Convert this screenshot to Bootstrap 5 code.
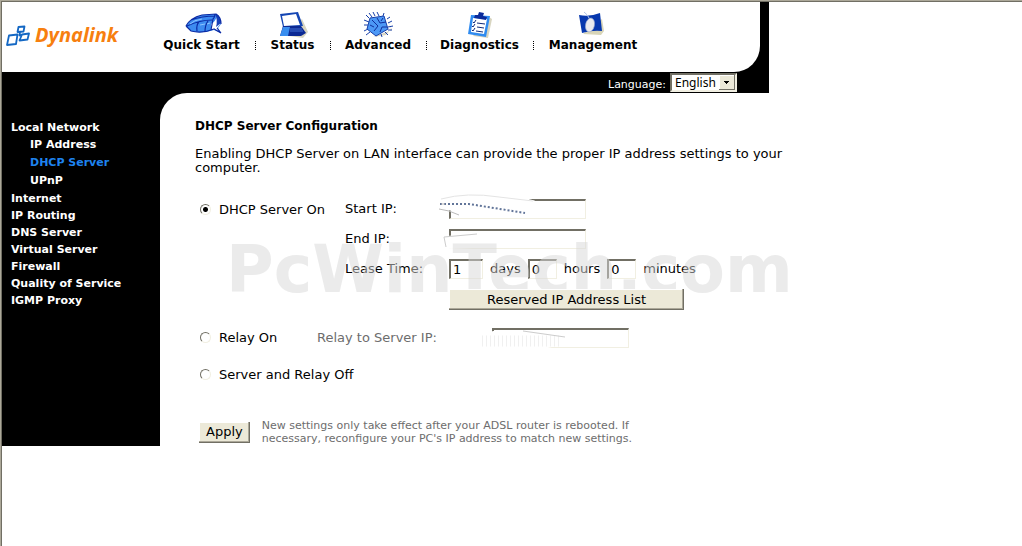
<!DOCTYPE html>
<html lang="en">
<head>
<meta charset="utf-8">
<meta name="viewport" content="width=device-width, initial-scale=1">
<title>DHCP Server Configuration</title>
<link href="https://cdn.jsdelivr.net/npm/bootstrap@5.3.0/dist/css/bootstrap.min.css" rel="stylesheet">
<script src="https://cdn.jsdelivr.net/npm/bootstrap@5.3.0/dist/js/bootstrap.bundle.min.js" defer></script>
<style>
  :root { --face: #ece9d8; --dark: #716f64; --mid: #aca899; --pale: #f1efe2; }
  html { min-height: 100%; display: flex; }
  body { flex: 1; font-family: "DejaVu Sans", Verdana, sans-serif; font-size: 13px; line-height: 14px; color: #000; background: #fff;
    border-top: 1px solid var(--mid); border-left: 1px solid var(--mid); }
  .viewframe { border-top: 1px solid var(--dark); border-left: 1px solid var(--dark); min-height: calc(100vh - 1px); }
  .shell { max-width: 767px; background: #000; }
  .masthead { background: #fff; margin-right: 9px; height: 70px; border-bottom-right-radius: 26px; }
  .brand { width: 146px; padding: 22px 0 0 3px; color: #f77f0f; text-decoration: none; }
  .brand-text { font: italic bold 20px/22px "Open Sans", sans-serif; }
  .topnav a { display: flex; flex-direction: column; align-items: center; color: #000; text-decoration: none; font-weight: bold; font-size: 12px; line-height: 12px; padding-top: 9px; }
  .topnav li + li a { background: repeating-linear-gradient(#000 0 1px, #fff 1px 2px) 0 39px / 1px 10px no-repeat; }
  .topnav svg { height: 28px; width: 40px; }
  .w-quick { width: 107px; } .w-status { width: 75px; } .w-adv { width: 96px; } .w-diag { width: 107px; } .w-man { width: 120px; }
  .langbar { height: 21px; padding-right: 32px; color: #fff; font-size: 11px; }
  .lang { appearance: none; width: 67px; height: 19px; border: 2px solid; border-color: var(--dark) var(--pale) var(--pale) var(--dark); border-radius: 0; padding: 0 0 0 3px; font: 12px/14px "Noto Sans", sans-serif; color: #000;
    background: #fff url("data:image/svg+xml,%3Csvg xmlns='http://www.w3.org/2000/svg' width='16' height='15'%3E%3Cpath fill='%23716f64' d='M0 0h16v15H0z'/%3E%3Cpath fill='%23fff' d='M0 0h15v14H0z'/%3E%3Cpath fill='%23ece9d8' d='M1 1h14v13H1z'/%3E%3Cpath d='M5 6h5v1H5zM6 7h3v1H6zM7 8h1v1H7z'/%3E%3C/svg%3E") right center no-repeat; }
  .sidemenu { width: 158px; padding: 26px 0 137px 9px; font-size: 11px; font-weight: bold; line-height: 17px; }
  .sidemenu a { color: #fff; text-decoration: none; }
  .sidemenu ul ul { padding-left: 19px; line-height: 18px; }
  .sidemenu a.current { color: #1e83ef; }
  .content { background: #fff; border-top-left-radius: 27px; padding: 26px 0 0 35px; position: relative; }
  h1 { font-size: 12px; line-height: 14px; font-weight: bold; margin: 0 0 14px; }
  .intro { margin: 0 -20px 24px 0; }
  .choice { display: flex; align-items: center; gap: 8px; padding-left: 5px; }
  .choice input { appearance: none; flex: none; width: 11px; height: 11px; margin: 0 0 2px; border-radius: 50%; border: 1px solid; border-color: var(--dark) var(--pale) var(--pale) var(--dark); background: #fff; }
  .choice input:checked { background: radial-gradient(circle, #000 0 2px, #fff 3px); }
  .choice-wide { width: 150px; } .choice-relay { width: 122px; }
  .choice-off { margin-top: 20px; }
  .lease-rows { gap: 10px; }
  .lease { gap: 7px; }
  .name { width: 104px; } .name-relay { width: 175px; }
  .field { height: 20px; border: 2px solid; border-color: var(--dark) var(--pale) var(--pale) var(--dark); border-width: 2px 1px 1px 2px; border-radius: 0; background: #fff; padding: 0 2px; font-size: 13px; line-height: 14px; }
  .ip { width: 137px; } .short { width: 34px; } .shorter { width: 29px; }
  .smudge { position: absolute; pointer-events: none; }
  .smudge-start { left: 92px; top: -8px; } .smudge-end { left: 98px; top: 2px; } .smudge-relay { left: 284px; top: -4px; }
  .btn-classic { font-size: 13px; line-height: 14px; border-radius: 0; background: var(--face); color: #000; padding: 2px 7px; border: 0; box-shadow: inset -1px -1px var(--dark), inset -2px -2px var(--mid), inset 1px 1px #fff; height: 21px; }
  .reserved { width: 235px; margin-left: 104px; position: relative; z-index: 3; }
  .relay-row { margin-top: 18px; }
  .apply-row { margin-top: 37px; }
  .muted { color: #6d6d6d; }
  .note { font-size: 11px; line-height: 13px; max-width: 410px; }
  .watermark { position: absolute; left: 66px; top: 144px; font-size: 65px; line-height: 65px; font-weight: bold; color: rgba(216,216,216,.5); pointer-events: none; z-index: 2; }
</style>
</head>
<body>
<div class="viewframe">
 <div class="shell">
  <header class="masthead d-flex">
    <a class="brand d-flex flex-shrink-0 align-items-start" href="#">
      <svg width="26" height="24" viewBox="0 0 26 24" fill="none" stroke="#1468c4" stroke-width="1.800" stroke-linejoin="round" aria-hidden="true">
        <path d="M4 11.500 12.500 10.500 11 20 2 21z M13.500 3 19.500 2.500 18.500 7.500 12.500 8z M17 10.500 24 9.500 22.500 15.500 14.500 16.500z M15 8 14.500 11.500 17 10.500"/>
      </svg>
      <span class="brand-text ms-1">Dynalink</span>
    </a>
    <nav aria-label="Main">
      <ul class="topnav d-flex list-unstyled m-0">
        <li class="w-quick"><a href="#">
          <svg viewBox="0 0 40 28" aria-hidden="true"><path d="M4 15Q8 7 20 4L34 3Q39 6 39 13L36 17 39 22 32 19Q20 23 9 20z" fill="#3d8bf0"/><path d="M29 13Q34 10 35 5L39 12 35 17 37 20 29 18z" fill="#fff"/><path d="M33 3Q38 5 39 12L34 16Q36 9 33 3z" fill="#1640b8"/><path d="M4 15Q8 7 20 4L34 3Q39 6 39 13M35 17 39 22 32 18Q20 23 9 20L4 15M5 15Q18 9 30 9M15 20Q14 14 17 11M23 21Q23 14 26 10M29 19 31 8Q33 6 33 3M9 9Q20 5 33 5" fill="none" stroke="#0b2aa4" stroke-width="1.200"/><path d="M8 13Q12 9 20 8M18 14 23 13M25 13 28 12" fill="none" stroke="#8cc4ff"/></svg>Quick Start</a></li>
        <li class="w-status"><a href="#">
          <svg viewBox="0 0 40 28" aria-hidden="true"><path d="M10 24 30 27 35 21 29 8z" fill="#d8d5c0"/><path d="M7 3 25 1 30 15 10 16z" fill="#1546b4"/><path d="M9 5 23 3 27 14 11 15z" fill="#fff"/><path d="M10 15 28 15 33 22 28 25 7 25z" fill="#0c2993"/><path d="M10 16 17 16 15 25 7 25z" fill="#398ef0"/><path d="M17 18H29M17 20H30" stroke="#5d91f1" stroke-width=".7"/></svg>Status</a></li>
        <li class="w-adv"><a href="#">
          <svg viewBox="0 0 40 28" aria-hidden="true"><path d="M15 26 28 24 33 18 30 9 34 19z" fill="#d8d5c0"/><path d="M11 7 8 4M14 6 11 2M17 5 15 1M21 5 19 1M25 5 26 2M29 8 32 6M30 12 34 10M30 16 35 15M30 19 34 19M27 21 30 24M23 23 24 26M12 21 8 24M10 18 6 20M10 14 6 14M11 11 6 9" stroke="#173fa8"/><path d="M12 7 26 5 30 18 18 25 9 18z" fill="#4c98f5" stroke="#173fa8"/><path d="M14 9 20 15 16 20M19 7 22 12 28 11M12 14 16 16M22 21 24 16 29 16M25 7 23 10" stroke="#102f9c" fill="none"/></svg>Advanced</a></li>
        <li class="w-diag"><a href="#">
          <svg viewBox="0 0 40 28" aria-hidden="true"><path d="M13 25 28 27 32 8 29 6z" fill="#d8d5c0"/><path d="M11 4 30 5 26 26 8 23z" fill="#2f8bf0"/><path d="M13 7 27 8 24 23 11 21z" fill="#fff"/><path d="M15 4 18 4 19 1 24 2 23 5 27 6 26 9 14 7z" fill="#0b2b9b"/><path d="M13 11 14 12 16 9M12 15 13 16 15 13M12 19 13 20 15 17M17 12 25 13M17 16 24 17M16 20 23 21" stroke="#112b78" fill="none"/></svg>Diagnostics</a></li>
        <li class="w-man"><a href="#">
          <svg viewBox="0 0 40 28" aria-hidden="true"><path d="M10 23 28 24 31 20 29 8z" fill="#d8d5b8"/><path d="M6 4Q17 6 27 2L29 20Q19 19 9 22z" fill="#0738ae"/><ellipse cx="17" cy="14" rx="4.400" ry="7" transform="rotate(12 17 14)" fill="#e9eaee" stroke="#9aa9cd" stroke-width=".6"/><path d="M16 7Q15 4 11 1" stroke="#b4c4e8" fill="none"/></svg>Management</a></li>
      </ul>
    </nav>
  </header>
  <div class="langbar d-flex justify-content-end align-items-center">
    <label for="lang" class="me-1 pt-1">Language:</label>
    <select id="lang" class="lang"><option>English</option></select>
  </div>
  <div class="d-flex">
    <nav class="sidemenu flex-shrink-0" aria-label="Settings">
      <ul class="list-unstyled m-0">
        <li><a href="#">Local Network</a>
          <ul class="list-unstyled">
            <li><a href="#">IP Address</a></li>
            <li><a href="#" class="current">DHCP Server</a></li>
            <li><a href="#">UPnP</a></li>
          </ul></li>
        <li><a href="#">Internet</a></li>
        <li><a href="#">IP Routing</a></li>
        <li><a href="#">DNS Server</a></li>
        <li><a href="#">Virtual Server</a></li>
        <li><a href="#">Firewall</a></li>
        <li><a href="#">Quality of Service</a></li>
        <li><a href="#">IGMP Proxy</a></li>
      </ul>
    </nav>
    <main class="content flex-grow-1">
      <h1>DHCP Server Configuration</h1>
      <p class="intro">Enabling DHCP Server on LAN interface can provide the proper IP address settings to your computer.</p>
      <form>
        <div class="d-flex align-items-start">
          <label class="choice choice-wide pt-1"><input type="radio" name="mode" checked>DHCP Server On</label>
          <div class="lease-rows d-flex flex-column">
            <div class="d-flex align-items-center position-relative">
              <label class="name" for="start">Start IP:</label><input id="start" class="field ip" type="text">
              <svg class="smudge smudge-start" width="130" height="32" aria-hidden="true"><path d="M3 12Q18 2 60 5T98 11L112 26 60 27 24 22 2 17z" fill="#fff"/><path d="M4 8Q30 1 62 6L96 10" fill="none" stroke="#e4e4e4"/><path d="M3 13H32L88 22" fill="none" stroke="#627599" stroke-width="2" stroke-dasharray="2 2"/><path d="M2 18 12 20 22 24M4 13H8" fill="none" stroke="#bbb"/></svg>
            </div>
            <div class="d-flex align-items-center position-relative">
              <label class="name" for="end">End IP:</label><input id="end" class="field ip" type="text">
              <svg class="smudge smudge-end" width="60" height="20" aria-hidden="true"><path d="M2 5 54 2V16L6 18z" fill="#fff"/><path d="M3 16 1 6 34 3" fill="none" stroke="#ccc"/></svg>
            </div>
            <div class="d-flex align-items-center">
              <label class="name" for="days">Lease Time:</label>
              <div class="lease d-flex align-items-center">
                <input id="days" class="field short" type="text" value="1"><label for="days">days</label>
                <input id="hours" class="field shorter" type="text" value="0"><label for="hours">hours</label>
                <input id="minutes" class="field shorter" type="text" value="0"><label for="minutes">minutes</label>
              </div>
            </div>
            <button type="button" class="btn btn-classic reserved">Reserved IP Address List</button>
          </div>
        </div>
        <div class="relay-row d-flex align-items-center position-relative">
          <label class="choice choice-relay"><input type="radio" name="mode">Relay On</label>
          <label class="name-relay muted" for="relay">Relay to Server IP:</label><input id="relay" class="field ip" type="text">
          <svg class="smudge smudge-relay" width="102" height="28" aria-hidden="true"><path d="M2 13 14 7H38L86 10V20L60 26H4z" fill="#fff"/><path d="M3 17H82" stroke="#f0f0f0" stroke-width="11" stroke-dasharray="1 3"/><path d="M44 7 86 13" fill="none" stroke="#ccc"/></svg>
        </div>
        <label class="choice choice-off"><input type="radio" name="mode">Server and Relay Off</label>
        <div class="apply-row d-flex align-items-center ps-1">
          <button type="button" class="btn btn-classic me-2">Apply</button>
          <p class="note muted mb-0 ms-1">New settings only take effect after your ADSL router is rebooted. If necessary, reconfigure your PC's IP address to match new settings.</p>
        </div>
      </form>
      <div class="watermark">PcWinTech.com</div>
    </main>
  </div>
 </div>
</div>
</body>
</html>
